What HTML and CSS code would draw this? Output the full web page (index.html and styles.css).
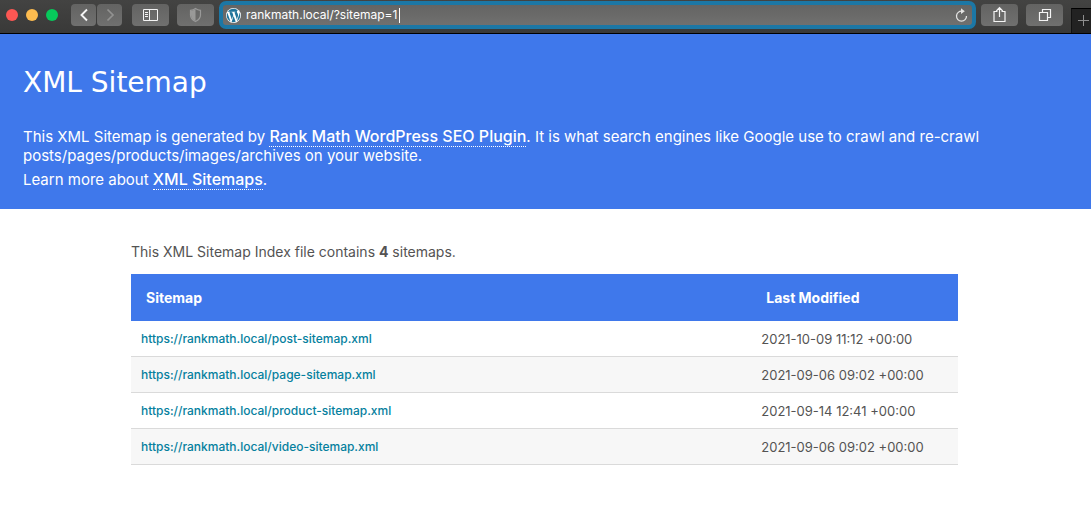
FILE: index.html
```html
<!DOCTYPE html>
<html lang="en">
<head>
<meta charset="utf-8">
<title>XML Sitemap</title>
<link rel="stylesheet" href="styles.css">
</head>
<body>
<div class="toolbar">
  <div class="lights">
    <span class="light light-close"></span>
    <span class="light light-min"></span>
    <span class="light light-max"></span>
  </div>
  <div class="nav">
    <button class="tool nav-button" aria-label="Back"><svg width="24" height="22" viewBox="0 0 24 22"><path d="M15 5.500 9.500 11l5.500 5.500" fill="none" stroke="#f4f4f4" stroke-width="1.900"/></svg></button>
    <button class="tool nav-button" aria-label="Forward"><svg width="24" height="22" viewBox="0 0 24 22"><path d="M9.500 5.500 15 11l-5.500 5.500" fill="none" stroke="#929291" stroke-width="1.700"/></svg></button>
  </div>
  <button class="tool side-button" aria-label="Sidebar"><svg width="37" height="22" viewBox="0 0 37 22" fill="none" stroke="#f4f4f4"><path d="M11.500 5.500h14v11h-14zM17.500 5.500v11M13 8.500h3M13 10.500h3M13 12.500h3"/></svg></button>
  <button class="tool shield-button" aria-label="Privacy report"><svg width="37" height="22" viewBox="0 0 37 22"><path d="M18.500 4.500c1.600 1.200 3.300 1.700 5 1.900v4.600c0 3.200-2.300 5.200-5 6.500-2.700-1.300-5-3.300-5-6.500V6.400c1.700-.2 3.400-.7 5-1.900z" fill="none" stroke="#999998" stroke-width="1.200"/><path d="M18.500 5c-1.500 1-3 1.500-4.500 1.700V11c0 3 2 4.800 4.500 6z" fill="#999998"/></svg></button>
  <div class="address">
    <svg class="site-icon" width="15" height="15" viewBox="0 0 24 24"><circle cx="12" cy="12" r="12" fill="#fff"/><path fill="#21759b" d="M21.469 6.825c.84 1.537 1.318 3.300 1.318 5.175 0 3.979-2.156 7.456-5.363 9.325l3.295-9.527c.615-1.540.820-2.771.820-3.864 0-.405-.026-.780-.070-1.110m-7.981.105c.647-.030 1.232-.105 1.232-.105.582-.075.514-.930-.067-.899 0 0-1.755.135-2.880.135-1.064 0-2.850-.150-2.850-.150-.585-.030-.661.855-.075.885 0 0 .540.061 1.125.090l1.680 4.605-2.370 7.080L5.354 6.900c.649-.030 1.234-.100 1.234-.100.585-.075.516-.930-.065-.896 0 0-1.746.138-2.874.138-.200 0-.438-.008-.690-.015C4.911 3.150 8.235 1.215 12 1.215c2.809 0 5.365 1.072 7.286 2.833-.046-.003-.091-.009-.141-.009-1.060 0-1.812.923-1.812 1.914 0 .890.513 1.643 1.060 2.531.411.720.890 1.643.890 2.977 0 .915-.354 1.994-.821 3.479l-1.075 3.585-3.900-11.610zM12 22.784c-1.059 0-2.081-.153-3.048-.437l3.237-9.406 3.315 9.087c.024.053.050.101.078.149-1.120.393-2.325.607-3.582.607M1.211 12c0-1.564.336-3.050.935-4.390L7.290 21.709C3.694 19.960 1.212 16.271 1.211 12"/></svg>
    <input class="url" type="text" aria-label="Address" value="rankmath.local/?sitemap=1">
    <span class="caret"></span>
    <button class="reload" aria-label="Reload"><svg width="15" height="15" viewBox="0 0 15 15"><path d="M8 3.200A5 5 0 1 0 12.500 8" fill="none" stroke="#e4e4e3" stroke-width="1.300"/><path d="M7 .3 10.800 3.200 7 6z" fill="#e4e4e3"/></svg></button>
  </div>
  <button class="tool share-button" aria-label="Share"><svg width="37" height="22" viewBox="0 0 37 22" fill="none" stroke="#f4f4f4" stroke-width="1.200"><path d="M16.500 7.500h-3.500v10h11v-10H20.500M18.500 13V4M15.300 7 18.500 3.700 21.700 7"/></svg></button>
  <button class="tool tabs-button" aria-label="Show tabs"><svg width="37" height="22" viewBox="0 0 37 22" fill="none" stroke="#f4f4f4" stroke-width="1.200"><path d="M13.500 8.500h8v8h-8zM16.500 8.500v-3h8v8h-3"/></svg></button>
  <button class="new-tab" aria-label="New tab"><svg width="20" height="25" viewBox="0 0 20 25"><path d="M11.500 6v11M6 11.500h11" stroke="#8e8e8e"/></svg></button>
</div>
<header class="hero">
  <h1 class="title">XML Sitemap</h1>
  <p class="intro">This XML Sitemap is generated by <a class="hero-link" href="#">Rank Math WordPress SEO Plugin</a>. It is what search engines like Google use to crawl and re-crawl posts/pages/products/images/archives on your website.</p>
  <p class="intro">Learn more about <a class="hero-link" href="#">XML Sitemaps</a>.</p>
</header>
<main class="content">
  <p class="summary">This XML Sitemap Index file contains <strong>4</strong> sitemaps.</p>
  <table class="sitemaps">
    <thead><tr><th class="col-name">Sitemap</th><th>Last Modified</th></tr></thead>
    <tbody>
      <tr><td><a class="map-link" href="#">https://rankmath.local/post-sitemap.xml</a></td><td>2021-10-09 11:12 +00:00</td></tr>
      <tr><td><a class="map-link" href="#">https://rankmath.local/page-sitemap.xml</a></td><td>2021-09-06 09:02 +00:00</td></tr>
      <tr><td><a class="map-link" href="#">https://rankmath.local/product-sitemap.xml</a></td><td>2021-09-14 12:41 +00:00</td></tr>
      <tr><td><a class="map-link" href="#">https://rankmath.local/video-sitemap.xml</a></td><td>2021-09-06 09:02 +00:00</td></tr>
    </tbody>
  </table>
</main>
</body>
</html>
```
FILE: styles.css
```css
* { box-sizing: border-box; }
body {
  margin: 0;
  background: #fff;
  color: #545353;
  font-family: Inter, "Liberation Sans", sans-serif;
  font-size: 13px;
}
button { border: 0; padding: 0; margin: 0; }
svg { display: block; flex: none; }

.toolbar {
  display: flex;
  align-items: flex-start;
  height: 34px;
  padding-left: 6px;
  background: linear-gradient(#434342, #393938);
  border-bottom: 1px solid #000;
}
.lights { display: flex; gap: 8px; margin: 9px 13px 0 0; }
.light { width: 12px; height: 12px; border-radius: 50%; }
.light-close { background: #fc5753; }
.light-min { background: #fdbc4f; }
.light-max { background: #07c95b; }
.tool {
  display: flex;
  align-items: center;
  justify-content: center;
  width: 37px;
  height: 22px;
  margin-top: 4px;
  border-radius: 4px;
  background: linear-gradient(#636362, #70706f);
}
.nav { display: flex; gap: 1px; margin-right: 10px; }
.nav-button { width: 25px; }
.side-button { margin-right: 8px; }
.shield-button { margin-right: 5px; }

.address {
  display: flex;
  flex: 1;
  align-items: center;
  height: 28px;
  margin: 1px 5px 0 0;
  padding: 0 3px;
  border: 4px solid #1c77a5;
  border-radius: 7px;
  background: linear-gradient(#646463, #70706f);
}
.url {
  width: 153px;
  margin-left: 5px;
  padding: 0;
  border: 0;
  outline: 0;
  background: transparent;
  color: #fff;
  font: 400 12px/16px Inter, "Liberation Sans", sans-serif;
}
.caret { width: 1px; height: 15px; background: #fff; }
.reload { margin-left: auto; background: transparent; }
.share-button { margin-right: 8px; }
.tabs-button { margin-right: 8px; }
.new-tab {
  width: 20px;
  height: 25px;
  margin-top: 8px;
  border-top: 1px solid #000;
  border-left: 1px solid #111;
  background: #222;
}

.hero {
  padding: 29px 23px 20px;
  background: #3f78eb;
  color: #fff;
}
.title {
  margin: 0 0 24px;
  font: 400 28px/40px "DejaVu Sans", sans-serif;
}
.intro {
  margin: 0;
  font-size: 15px;
  line-height: 19px;
}
.intro + .intro { margin-top: 5px; }
.hero-link {
  border-bottom: 1px dotted #fff;
  color: #fff;
  font-size: 16px;
  font-weight: 500;
  text-decoration: none;
}

.content { padding: 33px 133px 32px 131px; }
.summary {
  margin: 0 0 12px;
  font-size: 14px;
  line-height: 20px;
}
.sitemaps {
  width: 100%;
  border-collapse: separate;
  border-spacing: 0;
}
.sitemaps th {
  height: 47px;
  padding: 0 15px;
  background: #3f78eb;
  color: #fff;
  font-size: 14px;
  font-weight: 700;
  line-height: 20px;
  text-align: left;
}
.col-name { width: 75%; }
.sitemaps td {
  height: 36px;
  padding: 0 10px;
  border-bottom: 1px solid #dadada;
  line-height: 20px;
}
.sitemaps tbody tr:nth-child(even) { background: #f7f7f7; }
.map-link { color: #05809e; font-size: 12px; font-weight: 500; text-decoration: none; }
```
